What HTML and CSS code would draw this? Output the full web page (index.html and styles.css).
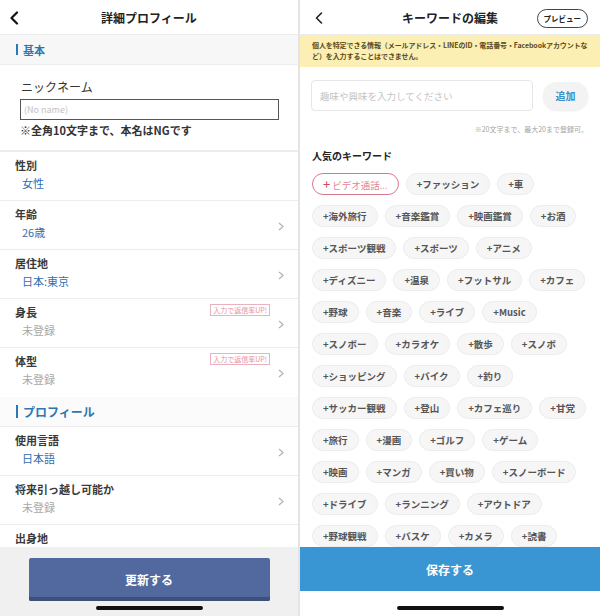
FILE: index.html
```html
<!DOCTYPE html>
<html lang="ja">
<head>
  <meta charset="UTF-8">
  <title>プロフィール編集</title>
  <meta name="viewport" content="width=device-width, initial-scale=1.0">
  <link rel="stylesheet" href="styles.css">
</head>
<body>

  <div class="screen screen-left">
    <div class="topbar">
      <svg class="back" width="10" height="14" viewBox="0 0 10 14"><polyline points="8,1.5 2.5,7 8,12.5" fill="none" stroke="#111" stroke-width="2.2" stroke-linecap="round" stroke-linejoin="round"/></svg>
      <h1>詳細プロフィール</h1>
    </div>

    <div class="scroll">
      <div class="section-title">基本</div>

      <div class="nickname">
        <p class="nick-label">ニックネーム</p>
        <input class="nick-input" type="text" placeholder="(No name)">
        <p class="nick-note">※全角10文字まで、本名はNGです</p>
      </div>

      <div class="row">
        <p class="row-label">性別</p>
        <p class="row-value">女性</p>
      </div>
      <div class="row">
        <p class="row-label">年齢</p>
        <p class="row-value">26歳</p>
        <svg class="chev" width="6" height="9" viewBox="0 0 6 9"><polyline points="1,1 5,4.5 1,8" fill="none" stroke="#b5b5b5" stroke-width="1.3"/></svg>
      </div>
      <div class="row">
        <p class="row-label">居住地</p>
        <p class="row-value">日本:東京</p>
        <svg class="chev" width="6" height="9" viewBox="0 0 6 9"><polyline points="1,1 5,4.5 1,8" fill="none" stroke="#b5b5b5" stroke-width="1.3"/></svg>
      </div>
      <div class="row">
        <p class="row-label">身長</p>
        <p class="row-value empty">未登録</p>
        <span class="badge">入力で返信率UP!</span>
        <svg class="chev" width="6" height="9" viewBox="0 0 6 9"><polyline points="1,1 5,4.5 1,8" fill="none" stroke="#b5b5b5" stroke-width="1.3"/></svg>
      </div>
      <div class="row no-line">
        <p class="row-label">体型</p>
        <p class="row-value empty">未登録</p>
        <span class="badge">入力で返信率UP!</span>
        <svg class="chev" width="6" height="9" viewBox="0 0 6 9"><polyline points="1,1 5,4.5 1,8" fill="none" stroke="#b5b5b5" stroke-width="1.3"/></svg>
      </div>

      <div class="section-title big">プロフィール</div>

      <div class="row">
        <p class="row-label">使用言語</p>
        <p class="row-value">日本語</p>
        <svg class="chev" width="6" height="9" viewBox="0 0 6 9"><polyline points="1,1 5,4.5 1,8" fill="none" stroke="#b5b5b5" stroke-width="1.3"/></svg>
      </div>
      <div class="row">
        <p class="row-label">将来引っ越し可能か</p>
        <p class="row-value empty">未登録</p>
        <svg class="chev" width="6" height="9" viewBox="0 0 6 9"><polyline points="1,1 5,4.5 1,8" fill="none" stroke="#b5b5b5" stroke-width="1.3"/></svg>
      </div>
      <div class="row">
        <p class="row-label">出身地</p>
      </div>
    </div>

    <div class="footer footer-left">
      <button class="update-btn">更新する</button>
      <div class="home-bar"></div>
    </div>
  </div>

  <div class="divider"></div>

  <div class="screen screen-right">
    <div class="topbar">
      <svg class="back" width="10" height="14" viewBox="0 0 10 14"><polyline points="7.5,2 2.5,7 7.5,12" fill="none" stroke="#222" stroke-width="1.6" stroke-linecap="round" stroke-linejoin="round"/></svg>
      <h1>キーワードの編集</h1>
      <span class="preview">プレビュー</span>
    </div>

    <div class="scroll">
      <div class="notice">個人を特定できる情報（メールアドレス・LINEのID・電話番号・Facebookアカウントな<br>ど）を入力することはできません。</div>

      <div class="add-row">
        <input class="kw-input" type="text" placeholder="趣味や興味を入力してください">
        <button class="add-btn">追加</button>
      </div>
      <p class="kw-note">※20文字まで、最大20まで登録可。</p>

      <h2 class="popular">人気のキーワード</h2>

      <div class="chips">
        <div class="chip-row">
          <span class="chip active"><b>+</b>ビデオ通話...</span>
          <span class="chip">+ファッション</span>
          <span class="chip">+車</span>
        </div>
        <div class="chip-row">
          <span class="chip">+海外旅行</span>
          <span class="chip">+音楽鑑賞</span>
          <span class="chip">+映画鑑賞</span>
          <span class="chip">+お酒</span>
        </div>
        <div class="chip-row">
          <span class="chip">+スポーツ観戦</span>
          <span class="chip">+スポーツ</span>
          <span class="chip">+アニメ</span>
        </div>
        <div class="chip-row">
          <span class="chip">+ディズニー</span>
          <span class="chip">+温泉</span>
          <span class="chip">+フットサル</span>
          <span class="chip">+カフェ</span>
        </div>
        <div class="chip-row">
          <span class="chip">+野球</span>
          <span class="chip">+音楽</span>
          <span class="chip">+ライブ</span>
          <span class="chip">+Music</span>
        </div>
        <div class="chip-row">
          <span class="chip">+スノボー</span>
          <span class="chip">+カラオケ</span>
          <span class="chip">+散歩</span>
          <span class="chip">+スノボ</span>
        </div>
        <div class="chip-row">
          <span class="chip">+ショッピング</span>
          <span class="chip">+バイク</span>
          <span class="chip">+釣り</span>
        </div>
        <div class="chip-row">
          <span class="chip">+サッカー観戦</span>
          <span class="chip">+登山</span>
          <span class="chip">+カフェ巡り</span>
          <span class="chip">+甘党</span>
        </div>
        <div class="chip-row">
          <span class="chip">+旅行</span>
          <span class="chip">+漫画</span>
          <span class="chip">+ゴルフ</span>
          <span class="chip">+ゲーム</span>
        </div>
        <div class="chip-row">
          <span class="chip">+映画</span>
          <span class="chip">+マンガ</span>
          <span class="chip">+買い物</span>
          <span class="chip">+スノーボード</span>
        </div>
        <div class="chip-row">
          <span class="chip">+ドライブ</span>
          <span class="chip">+ランニング</span>
          <span class="chip">+アウトドア</span>
        </div>
        <div class="chip-row">
          <span class="chip">+野球観戦</span>
          <span class="chip">+バスケ</span>
          <span class="chip">+カメラ</span>
          <span class="chip">+読書</span>
        </div>
      </div>
    </div>

    <div class="footer footer-right">
      <button class="save-btn">保存する</button>
      <div class="home-bar"></div>
    </div>
  </div>

</body>
</html>
```

FILE: styles.css
```css
* {
  box-sizing: border-box;
}

body {
  margin: 0;
  width: 600px;
  height: 616px;
  display: flex;
  font-family: "Noto Sans CJK JP", "Noto Sans", sans-serif;
  color: #333;
  background: #fff;
  overflow: hidden;
}

p {
  margin: 0;
}

.screen {
  height: 616px;
  display: flex;
  flex-direction: column;
  overflow: hidden;
}

.screen-left {
  width: 298px;
  background: #fff;
}

.screen-right {
  width: 300px;
  background: #fff;
}

.divider {
  width: 2px;
  background: #e4e4e4;
}

/* header */

.topbar {
  height: 35px;
  flex-shrink: 0;
  display: flex;
  align-items: center;
  justify-content: center;
  position: relative;
  border-bottom: 1px solid #ececec;
}

.topbar h1 {
  margin: 0;
  font-size: 12px;
  font-weight: bold;
  color: #222;
}

.back {
  position: absolute;
  left: 9px;
  top: 11px;
}

.screen-right .back {
  left: 14px;
}

.preview {
  position: absolute;
  right: 12px;
  top: 9px;
  height: 19px;
  padding: 0 6px;
  border: 1px solid #444;
  border-radius: 10px;
  font-size: 7.5px;
  font-weight: bold;
  line-height: 17px;
  color: #222;
}

.scroll {
  flex: 1;
  overflow: hidden;
}

/* left screen */

.section-title {
  height: 30px;
  display: flex;
  align-items: center;
  padding-left: 16px;
  background: #f7f7f7;
  font-size: 11px;
  font-weight: bold;
  color: #2a78b5;
  border-bottom: 1px solid #ececec;
}

.section-title::before {
  content: "";
  width: 2px;
  height: 11px;
  margin-right: 5px;
  background: #2a78b5;
}

.section-title.big {
  font-size: 12px;
  background: #fbfbfb;
}

.section-title.big::before {
  height: 13px;
}

.nickname {
  padding: 13px 19px 12px 20px;
  border-bottom: 2px solid #ededed;
}

.nick-label {
  font-size: 12px;
  line-height: 18px;
  color: #333;
  padding-left: 1px;
}

.nick-input {
  display: block;
  width: 100%;
  height: 21px;
  margin-top: 3px;
  padding: 0 3px;
  border: 1px solid #555;
  font-family: inherit;
  font-size: 9px;
}

.nick-input::placeholder {
  color: #c2c2c2;
}

.nick-note {
  margin-top: 2px;
  font-size: 11px;
  font-weight: bold;
  line-height: 16px;
  color: #333;
}

.row {
  height: 49px;
  padding: 4px 16px 0 15px;
  border-bottom: 1px solid #ececec;
  position: relative;
}

.row.no-line {
  border-bottom: none;
}

.row-label {
  font-size: 11px;
  font-weight: bold;
  line-height: 18px;
  color: #3a3a3a;
}

.row-value {
  padding-left: 7px;
  font-size: 11px;
  line-height: 18px;
  color: #2f6fb0;
}

.row-value.empty {
  color: #a8a8a8;
}

.chev {
  position: absolute;
  right: 14px;
  top: 21px;
}

.badge {
  position: absolute;
  right: 28px;
  top: 5px;
  height: 12px;
  padding: 0 2px;
  border: 1px solid #eab2bf;
  font-size: 7px;
  line-height: 10px;
  color: #e890a4;
}

.footer {
  flex-shrink: 0;
  position: relative;
}

.footer-left {
  height: 69px;
  background: #f0f0f0;
  padding-top: 11px;
  display: flex;
  flex-direction: column;
  align-items: center;
}

.update-btn {
  width: 241px;
  height: 43px;
  border: none;
  border-radius: 2px;
  background: #52699f;
  box-shadow: inset 0 -4px 0 #3f4f78;
  color: #fff;
  font-family: inherit;
  font-size: 12px;
  font-weight: bold;
}

.home-bar {
  width: 107px;
  height: 4px;
  border-radius: 2px;
  background: #111;
  margin-top: 5px;
}

/* right screen */

.notice {
  height: 32px;
  padding: 5px 8px 0 12px;
  background: #fcefb3;
  font-size: 7px;
  font-weight: bold;
  line-height: 11px;
  letter-spacing: -0.1px;
  color: #5b4a1c;
  white-space: nowrap;
}

.add-row {
  display: flex;
  align-items: center;
  gap: 10px;
  margin-top: 13px;
  padding: 0 12px 0 11px;
}

.kw-input {
  width: 222px;
  height: 31px;
  padding: 0 8px;
  border: 1px solid #e6e6e6;
  border-radius: 4px;
  font-family: inherit;
  font-size: 9.5px;
}

.kw-input::placeholder {
  color: #c4c4c4;
}

.add-btn {
  flex: 1;
  height: 28px;
  border: none;
  border-radius: 14px;
  background: #f3f3f3;
  box-shadow: 0 1px 2px rgba(0, 0, 0, 0.08);
  color: #3b8fc9;
  font-family: inherit;
  font-size: 10px;
  font-weight: bold;
}

.kw-note {
  margin-top: 13px;
  padding-right: 12px;
  text-align: right;
  font-size: 7px;
  line-height: 10px;
  color: #a5a5a5;
}

.popular {
  margin: 15px 0 0 12px;
  font-size: 10px;
  font-weight: bold;
  line-height: 14px;
  color: #222;
}

.chips {
  margin-top: 10px;
  padding-left: 12px;
  display: flex;
  flex-direction: column;
  gap: 10px;
}

.chip-row {
  display: flex;
  gap: 7px;
}

.chip {
  height: 22px;
  padding: 0 10px;
  border: 1px solid #ececec;
  border-radius: 11px;
  background: #f6f6f6;
  font-size: 9.5px;
  font-weight: bold;
  line-height: 20px;
  color: #555;
  white-space: nowrap;
}

.chip.active {
  background: #fff;
  border: 1px solid #d9788f;
  color: #e67f98;
  font-weight: normal;
}

.chip.active b {
  font-size: 13px;
  font-weight: normal;
  color: #d9455f;
  margin-right: 2px;
}

.footer-right {
  height: 69px;
  background: #fff;
  display: flex;
  flex-direction: column;
  align-items: center;
}

.save-btn {
  width: 100%;
  height: 44px;
  border: none;
  background: #3a96d2;
  color: #fff;
  font-family: inherit;
  font-size: 12px;
  font-weight: bold;
}

.footer-right .home-bar {
  margin-top: 15px;
}
```
